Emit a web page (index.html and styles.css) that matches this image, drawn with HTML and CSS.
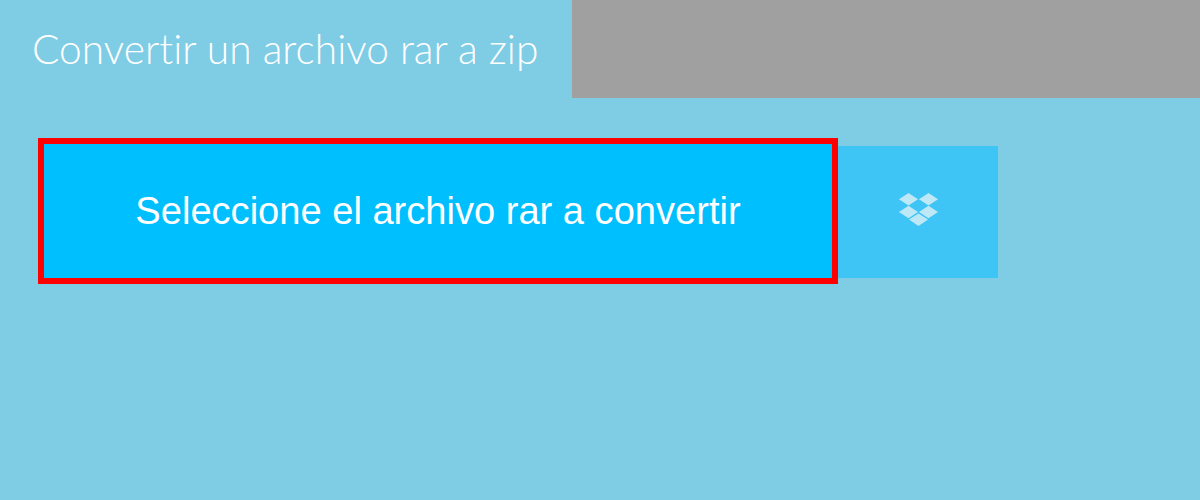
FILE: index.html
```html
<!DOCTYPE html>
<html lang="es">
<head>
    <meta charset="UTF-8">
    <title>Convertir un archivo rar a zip</title>
    <link rel="stylesheet" href="styles.css">
</head>
<body>
    <!-- Header -->
    <header class="header">
        <h1 class="title">Convertir un archivo rar a zip</h1>
        <div class="ad-slot"></div>
    </header>

    <!-- Upload buttons -->
    <main class="upload-row">
        <button type="button" class="select-btn">Seleccione el archivo rar a convertir</button>
        <button type="button" class="dropbox-btn" aria-label="Dropbox">
            <svg class="dropbox-icon" viewBox="0 0 40 33" width="40" height="33">
                <path d="M10.5 0 L20 6.2 L10.5 12.4 L1 6.2 Z"/>
                <path d="M30.5 0 L40 6.2 L30.5 12.4 L21 6.2 Z"/>
                <path d="M10.5 12.8 L20 19 L10.5 25.2 L1 19 Z"/>
                <path d="M30.5 12.8 L40 19 L30.5 25.2 L21 19 Z"/>
                <path d="M20.5 20.4 L30 26.6 L20.5 33 L11 26.6 Z"/>
            </svg>
        </button>
    </main>
</body>
</html>
```

FILE: styles.css
```css
/* Base Styles */
body {
    margin: 0;
    background-color: #7fcce5;
    color: white;
    font-family: 'Liberation Sans', Arial, sans-serif;
}

/* Header */
.header {
    display: flex;
    height: 98px;
}

.title {
    width: 572px;
    box-sizing: border-box;
    margin: 0;
    padding-left: 32px;
    font-family: Lato, 'Noto Sans', sans-serif;
    font-size: 40.7px;
    font-weight: 300;
    font-variant-ligatures: none;
    line-height: 98px;
    white-space: nowrap;
}

.ad-slot {
    flex-grow: 1;
    background-color: #a0a0a0;
}

/* Upload buttons */
.upload-row {
    display: flex;
    align-items: flex-start;
    margin: 40px 0 0 38px;
}

.select-btn {
    width: 800px;
    height: 146px;
    box-sizing: border-box;
    border: 6px solid #ff0000;
    background-color: #00bfff;
    color: white;
    font-family: inherit;
    font-size: 38.1px;
    cursor: pointer;
}

.dropbox-btn {
    display: flex;
    align-items: center;
    justify-content: center;
    width: 160px;
    height: 132px;
    margin-top: 8px;
    padding: 0 0 5px;
    border: none;
    background-color: #3fc5f5;
    cursor: pointer;
}

.dropbox-icon {
    fill: #bfe8f6;
}
```
